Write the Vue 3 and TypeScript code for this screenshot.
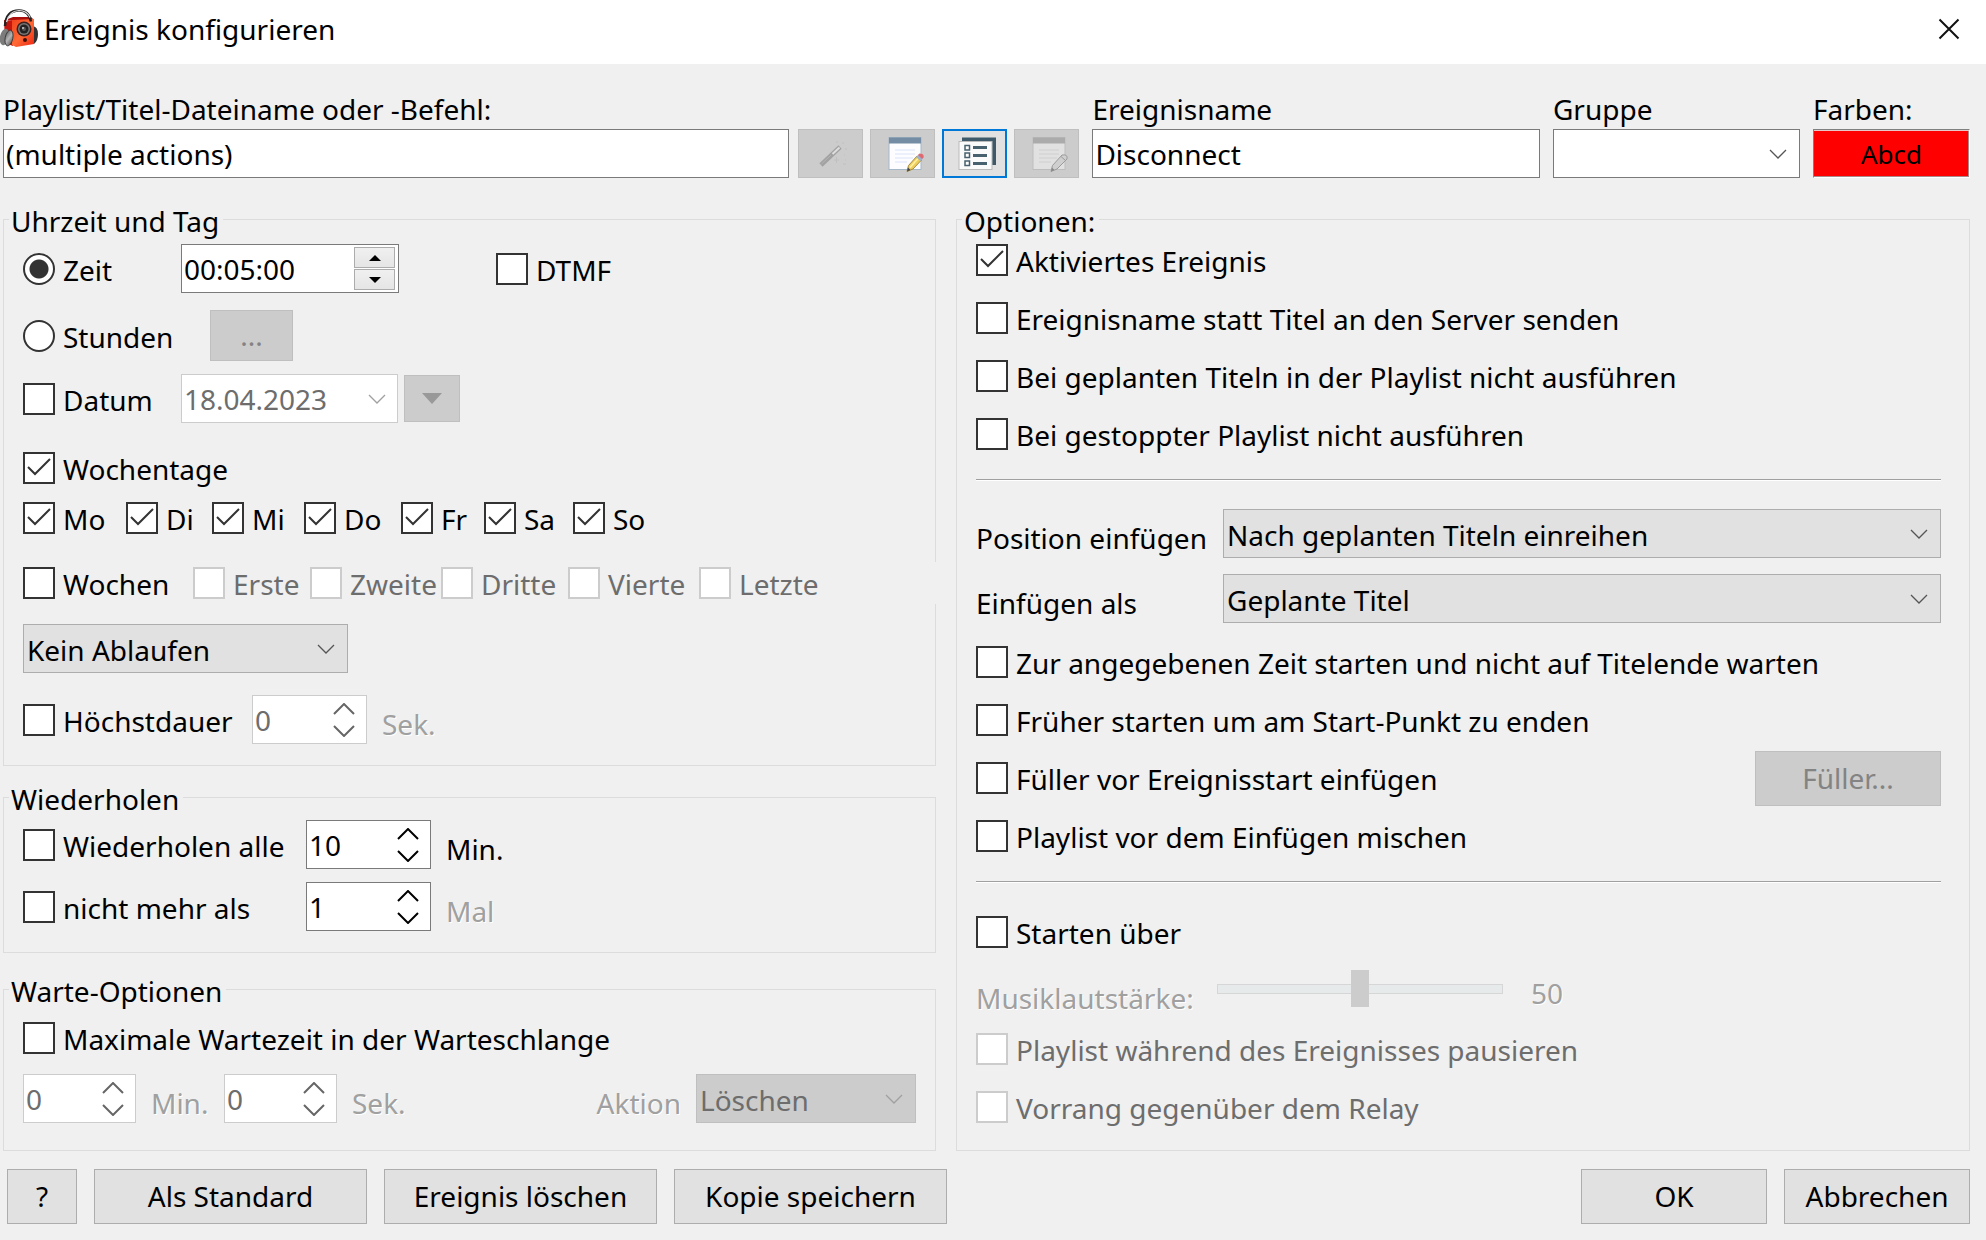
<script setup lang="ts">
import { reactive, ref } from 'vue'

interface Option {
  label: string
  checked: boolean
}

const opts = (labels: string[], checked = false): Option[] =>
  labels.map((label) => ({ label, checked }))

const fileName = ref('(multiple actions)')
const eventName = ref('Disconnect')
const group = ref('')
const mode = ref('time')
const time = ref('00:05:00')
const date = ref('18.04.2023')
const dtmf = ref(false)
const useDate = ref(false)
const useDays = ref(true)
const useWeeks = ref(false)
const days = reactive(opts(['Mo', 'Di', 'Mi', 'Do', 'Fr', 'Sa', 'So'], true))
const weeks = reactive(opts(['Erste', 'Zweite', 'Dritte', 'Vierte', 'Letzte']))
const expiry = ref('Kein Ablaufen')
const useMax = ref(false)
const maxDuration = ref(0)

const repeats = reactive([
  { label: 'Wiederholen alle', checked: false, value: 10, unit: 'Min.', dim: false },
  { label: 'nicht mehr als', checked: false, value: 1, unit: 'Mal', dim: true },
])

const useWait = ref(false)
const waits = reactive([
  { value: 0, unit: 'Min.' },
  { value: 0, unit: 'Sek.' },
])
const waitAction = ref('Löschen')

const general = reactive<Option[]>([
  { label: 'Aktiviertes Ereignis', checked: true },
  ...opts([
    'Ereignisname statt Titel an den Server senden',
    'Bei geplanten Titeln in der Playlist nicht ausführen',
    'Bei gestoppter Playlist nicht ausführen',
  ]),
])
const position = ref('Nach geplanten Titeln einreihen')
const insertAs = ref('Geplante Titel')
const starting = reactive(
  opts([
    'Zur angegebenen Zeit starten und nicht auf Titelende warten',
    'Früher starten um am Start-Punkt zu enden',
    'Füller vor Ereignisstart einfügen',
    'Playlist vor dem Einfügen mischen',
  ]),
)
const startOver = ref(false)
const volume = ref(50)
const overOptions = reactive(
  opts(['Playlist während des Ereignisses pausieren', 'Vorrang gegenüber dem Relay']),
)
</script>

<template>
  <div class="dialog">
    <header class="titlebar">
      <svg class="logo" viewBox="0 0 38 38" aria-hidden="true">
        <defs>
          <linearGradient id="box" x1="0" y1="0" x2="1" y2="1">
            <stop offset="0" stop-color="#f0401c" />
            <stop offset="0.5" stop-color="#ff6a35" />
            <stop offset="1" stop-color="#ee2410" />
          </linearGradient>
          <linearGradient id="cup" x1="0" y1="0" x2="1" y2="1">
            <stop offset="0" stop-color="#555" />
            <stop offset="0.5" stop-color="#b5b5b5" />
            <stop offset="1" stop-color="#4a4a4a" />
          </linearGradient>
        </defs>
        <path d="M33 17q5 1 5 8t-4 10z" fill="#333" />
        <path d="M5 11l8-3h18l3 3-2 1H13z" fill="#a80f0c" />
        <path d="M4 11l9 1v25l-8-3z" fill="#c3170f" />
        <path d="M12 11l22-1v25l-18 3-4-2z" fill="url(#box)" />
        <path d="M5 17Q6 1.500 19 1.500q10 0 12 11" fill="none" stroke="#222" stroke-width="2.500" />
        <path d="M6.500 13Q9 2 19 1.500q8 0 11 7" fill="none" stroke="#e4e4e4" stroke-width="1.200" />
        <circle cx="24" cy="20" r="7.500" fill="#3a2220" />
        <circle cx="24" cy="20" r="6" fill="#777" />
        <circle cx="24" cy="20" r="4.500" fill="#222" />
        <circle cx="24" cy="20" r="2" fill="#555" />
        <circle cx="23" cy="19" r="1" fill="#ccc" />
        <circle cx="25" cy="31" r="2" fill="#401008" />
        <ellipse cx="4.500" cy="28" rx="4.500" ry="8.500" transform="rotate(12 4.500 28)" fill="#7c7c7c" />
        <ellipse cx="9" cy="29" rx="3.800" ry="8" transform="rotate(12 9 29)" fill="url(#cup)" stroke="#333" stroke-width="0.800" />
      </svg>
      <h1 class="title">Ereignis konfigurieren</h1>
      <button type="button" class="close" aria-label="Schließen">
        <svg width="22" height="22" viewBox="0 0 22 22"><path d="M1.500 1.500l19 19M20.500 1.500l-19 19" stroke="#111" stroke-width="2" /></svg>
      </button>
    </header>

    <form class="body" @submit.prevent>
      <div class="top">
        <div class="field">
          <label for="file">Playlist/Titel-Dateiname oder -Befehl:</label>
          <div class="file-row">
            <input id="file" v-model="fileName" class="text" type="text" />
            <div class="tools">
              <button type="button" class="tool" disabled aria-label="Assistent">
                <svg viewBox="0 0 42 42">
                  <path d="M11 32L30 14" stroke="#a2a2a2" stroke-width="4.500" />
                  <path d="M22.500 21L29.500 14.500" stroke="#dedede" stroke-width="2" />
                  <path d="M11.500 31L21 22" stroke="#b4b4b4" stroke-width="1" />
                  <path d="M26 9h2M32 10h2M35 16h2M34 22h1M24 27h5M26.500 24v6M33 31h3M35 27h1" stroke="#c0c0c0" stroke-width="1" />
                </svg>
              </button>
              <button type="button" class="tool" aria-label="Bearbeiten">
                <svg viewBox="0 0 42 42">
                  <rect x="7" y="4.500" width="32" height="32" fill="#fdfdff" stroke="#a5b8c8" />
                  <rect x="7" y="4.500" width="32" height="6" fill="#758da4" />
                  <path d="M13 17h20M13 21h20M13 25h18M13 29h12" stroke="#e6ecfb" stroke-width="1.500" />
                  <path d="M25 38.500l1.500-6L35 23l4.500 4-8.500 9z" fill="#efcf5c" stroke="#a58a43" />
                  <path d="M28 34.500l8-9" stroke="#fff2a8" stroke-width="1.500" />
                  <path d="M34 24l2.500-2.500 4.500 4-2.500 2.500z" fill="#9eb2cf" />
                  <path d="M36 22l1.500-1.500q5 0 4 4L40 26z" fill="#e06a70" />
                  <path d="M25 38.500l1-4 2.500 2.500z" fill="#444" />
                </svg>
              </button>
              <button type="button" class="tool active" aria-label="Aktionsliste">
                <svg viewBox="0 0 42 42">
                  <path d="M8 4.500h34V32h-4V9H8z" fill="#3e5a6a" />
                  <rect x="5" y="8.500" width="33" height="28" fill="#fafafa" stroke="#bbb" />
                  <path d="M11 12.500h4.500V17H11zM11 20h4.500v4.500H11zM11 28h4.500v4.500H11z" fill="#fff" stroke="#48616f" stroke-width="1.500" />
                  <path d="M19 14.500h14M19 22.500h14M19 30.500h14" stroke="#48616f" stroke-width="3" />
                </svg>
              </button>
              <button type="button" class="tool" disabled aria-label="Aktion bearbeiten">
                <svg viewBox="0 0 42 42">
                  <rect x="7" y="4.500" width="32" height="32" fill="#e1e1e1" stroke="#bdbdbd" />
                  <rect x="7" y="4.500" width="32" height="6" fill="#ababab" />
                  <path d="M13 17h20M13 21h20M13 25h18M13 29h12" stroke="#d5d5d5" stroke-width="1.500" />
                  <path d="M25 38.500l1.500-6L36 22q6-1 5 4l-10 10z" fill="#cfcfcf" stroke="#9b9b9b" />
                  <path d="M35 23.500l4.500 4" stroke="#9b9b9b" />
                  <path d="M25 38.500l1-4 2.500 2.500z" fill="#888" />
                </svg>
              </button>
            </div>
          </div>
        </div>
        <div class="field">
          <label for="name">Ereignisname</label>
          <input id="name" v-model="eventName" class="text" type="text" />
        </div>
        <div class="field">
          <label for="group">Gruppe</label>
          <span class="combo white">
            <select id="group" v-model="group"><option value=""></option></select>
            <svg viewBox="0 0 18 10"><path d="M1 1l8 8 8-8" /></svg>
          </span>
        </div>
        <div class="field">
          <label for="colors">Farben:</label>
          <button id="colors" type="button" class="swatch">Abcd</button>
        </div>
      </div>

      <div class="columns">
        <div class="left">
          <fieldset>
            <legend>Uhrzeit und Tag</legend>
            <div class="row time">
              <label class="check lead"><input v-model="mode" type="radio" name="mode" value="time" /><span>Zeit</span></label>
              <span class="spin clock">
                <input v-model="time" type="text" aria-label="Uhrzeit" />
                <span class="steps">
                  <button type="button" aria-label="Später"><svg viewBox="0 0 12 6"><path d="M0 6l6-6 6 6z" /></svg></button>
                  <button type="button" aria-label="Früher"><svg viewBox="0 0 12 6"><path d="M0 0l6 6 6-6z" /></svg></button>
                </span>
              </span>
              <label class="check dtmf"><input v-model="dtmf" type="checkbox" /><span>DTMF</span></label>
            </div>
            <div class="row hours">
              <label class="check lead"><input v-model="mode" type="radio" name="mode" value="hours" /><span>Stunden</span></label>
              <button type="button" class="button dots" disabled>...</button>
            </div>
            <div class="row date">
              <label class="check lead"><input v-model="useDate" type="checkbox" /><span>Datum</span></label>
              <span class="spin picker off">
                <input v-model="date" type="text" aria-label="Datum" disabled />
                <svg viewBox="0 0 18 10"><path d="M1 1l8 8 8-8" /></svg>
              </span>
              <button type="button" class="button drop" disabled aria-label="Datum wählen">
                <svg viewBox="0 0 20 11"><path d="M0 0h20L10 11z" /></svg>
              </button>
            </div>
            <div class="row weekdays">
              <label class="check"><input v-model="useDays" type="checkbox" /><span>Wochentage</span></label>
            </div>
            <div class="days">
              <label v-for="d in days" :key="d.label" class="check"><input v-model="d.checked" type="checkbox" /><span>{{ d.label }}</span></label>
            </div>
            <div class="weeks">
              <label class="check"><input v-model="useWeeks" type="checkbox" /><span>Wochen</span></label>
              <label v-for="w in weeks" :key="w.label" class="check off"><input v-model="w.checked" type="checkbox" disabled /><span>{{ w.label }}</span></label>
            </div>
            <div class="row expiry">
              <span class="combo">
                <select v-model="expiry" aria-label="Ablauf"><option>Kein Ablaufen</option></select>
                <svg viewBox="0 0 18 10"><path d="M1 1l8 8 8-8" /></svg>
              </span>
            </div>
            <div class="row max">
              <label class="check"><input v-model="useMax" type="checkbox" /><span>Höchstdauer</span></label>
              <span class="spin off">
                <input id="max" v-model.number="maxDuration" type="number" disabled />
                <span class="arrows">
                  <button type="button" disabled aria-label="Mehr"><svg viewBox="0 0 22 12"><path d="M1 11L11 1l10 10" /></svg></button>
                  <button type="button" disabled aria-label="Weniger"><svg viewBox="0 0 22 12"><path d="M1 1l10 10L21 1" /></svg></button>
                </span>
              </span>
              <label class="unit dim" for="max">Sek.</label>
            </div>
          </fieldset>

          <fieldset class="repeat">
            <legend>Wiederholen</legend>
            <div v-for="(r, i) in repeats" :key="r.label" class="row">
              <label class="check"><input v-model="r.checked" type="checkbox" /><span>{{ r.label }}</span></label>
              <span class="spin">
                <input :id="'repeat' + i" v-model.number="r.value" type="number" />
                <span class="arrows">
                  <button type="button" aria-label="Mehr" @click="r.value++"><svg viewBox="0 0 22 12"><path d="M1 11L11 1l10 10" /></svg></button>
                  <button type="button" aria-label="Weniger" @click="r.value--"><svg viewBox="0 0 22 12"><path d="M1 1l10 10L21 1" /></svg></button>
                </span>
              </span>
              <label class="unit" :class="{ dim: r.dim }" :for="'repeat' + i">{{ r.unit }}</label>
            </div>
          </fieldset>

          <fieldset class="wait">
            <legend>Warte-Optionen</legend>
            <label class="check"><input v-model="useWait" type="checkbox" /><span>Maximale Wartezeit in der Warteschlange</span></label>
            <div class="row">
              <div v-for="(w, i) in waits" :key="w.unit" class="pair">
                <span class="spin off">
                  <input :id="'wait' + i" v-model.number="w.value" type="number" disabled />
                  <span class="arrows">
                    <button type="button" disabled aria-label="Mehr"><svg viewBox="0 0 22 12"><path d="M1 11L11 1l10 10" /></svg></button>
                    <button type="button" disabled aria-label="Weniger"><svg viewBox="0 0 22 12"><path d="M1 1l10 10L21 1" /></svg></button>
                  </span>
                </span>
                <label class="unit dim" :for="'wait' + i">{{ w.unit }}</label>
              </div>
              <label class="unit dim action" for="action">Aktion</label>
              <span class="combo off">
                <select id="action" v-model="waitAction" disabled><option>Löschen</option></select>
                <svg viewBox="0 0 18 10"><path d="M1 1l8 8 8-8" /></svg>
              </span>
            </div>
          </fieldset>
        </div>

        <fieldset class="options">
          <legend>Optionen:</legend>
          <div class="list general">
            <label v-for="o in general" :key="o.label" class="check"><input v-model="o.checked" type="checkbox" /><span>{{ o.label }}</span></label>
          </div>
          <hr />
          <div class="selects">
            <div class="row">
              <label class="unit" for="position">Position einfügen</label>
              <span class="combo">
                <select id="position" v-model="position"><option>Nach geplanten Titeln einreihen</option></select>
                <svg viewBox="0 0 18 10"><path d="M1 1l8 8 8-8" /></svg>
              </span>
            </div>
            <div class="row">
              <label class="unit" for="insert">Einfügen als</label>
              <span class="combo">
                <select id="insert" v-model="insertAs"><option>Geplante Titel</option></select>
                <svg viewBox="0 0 18 10"><path d="M1 1l8 8 8-8" /></svg>
              </span>
            </div>
          </div>
          <div class="list starting">
            <div v-for="(o, i) in starting" :key="o.label" class="line">
              <label class="check"><input v-model="o.checked" type="checkbox" /><span>{{ o.label }}</span></label>
              <button v-if="i === 2" type="button" class="button" disabled>Füller...</button>
            </div>
          </div>
          <hr />
          <label class="check over"><input v-model="startOver" type="checkbox" /><span>Starten über</span></label>
          <div class="volume">
            <label class="dim" for="volume">Musiklautstärke:</label>
            <input id="volume" v-model.number="volume" type="range" min="0" max="100" disabled />
            <output class="dim" for="volume">{{ volume }}</output>
          </div>
          <div class="list">
            <label v-for="o in overOptions" :key="o.label" class="check off"><input v-model="o.checked" type="checkbox" disabled /><span>{{ o.label }}</span></label>
          </div>
        </fieldset>
      </div>

      <footer class="footer">
        <button type="button" class="button help">?</button>
        <button type="button" class="button big">Als Standard</button>
        <button type="button" class="button big">Ereignis löschen</button>
        <button type="button" class="button big">Kopie speichern</button>
        <button type="submit" class="button ok">OK</button>
        <button type="button" class="button">Abbrechen</button>
      </footer>
    </form>
  </div>
</template>

<style>
body {
  margin: 0;
  background: #f0f0f0;
}
</style>

<style scoped>
.dialog,
.dialog * {
  box-sizing: border-box;
}
.dialog {
  min-height: 100vh;
  background: #f0f0f0;
  color: #000;
  font: 28px/38px 'Noto Sans', 'Open Sans', sans-serif;
}
button,
input,
select {
  margin: 0;
  padding: 0;
  border: 0;
  border-radius: 0;
  background: none;
  color: inherit;
  font: inherit;
  outline: none;
}
.titlebar {
  display: flex;
  align-items: center;
  height: 64px;
  padding: 0 26px 6px 0;
  background: #fff;
}
.logo {
  width: 38px;
  height: 38px;
  margin: 0 6px 2px 0;
}
.title {
  flex: 1;
  margin: 0;
  font-size: 28px;
  font-weight: 400;
}
.close {
  display: flex;
}
.body {
  padding: 26px 16px 16px 3px;
}
.top {
  display: grid;
  grid-template-columns: minmax(0, 1075fr) minmax(0, 447fr) 247px 157px;
  gap: 13px;
}
.field {
  display: flex;
  flex-direction: column;
  gap: 1px;
  min-width: 0;
}
.field > label {
  white-space: nowrap;
}
.file-row {
  display: flex;
  gap: 9px;
}
.text {
  flex: 1;
  width: 100%;
  min-width: 0;
  height: 49px;
  flex-basis: auto;
  padding: 0 2px;
  border: 1px solid #7a7a7a;
  background: #fff;
}
.file-row .text {
  flex-basis: 0;
}
.tools {
  display: flex;
  gap: 7px;
}
.tool {
  display: flex;
  align-items: center;
  justify-content: center;
  width: 65px;
  height: 49px;
  border: 1px solid #bfbfbf;
  background: #ccc;
}
.tool svg {
  flex: none;
  width: 42px;
  height: 42px;
}
.tool.active {
  border: 2px solid #0078d7;
  background: #e1e1e1;
}
.swatch {
  height: 49px;
  border: 1px solid;
  border-color: #808080 #fff #fff #808080;
  background: #f00;
  box-shadow: inset 0 1px #e8c8c8, inset -1px -1px #a88;
  font-size: 26px;
}
.combo {
  display: grid;
  align-items: center;
  height: 49px;
  border: 1px solid #adadad;
  background: #e1e1e1;
}
.combo select,
.combo svg {
  grid-area: 1 / 1;
}
.combo select {
  width: 100%;
  height: 47px;
  padding: 3px 40px 0 3px;
  appearance: none;
}
.combo svg {
  justify-self: end;
  margin-right: 12px;
  pointer-events: none;
}
.combo svg,
.picker svg {
  width: 18px;
  height: 10px;
  fill: none;
  stroke: #555;
  stroke-width: 1.3;
}
.combo.white {
  border-color: #7a7a7a;
  background: #fff;
}
.combo.off {
  border-color: #bfbfbf;
  background: #ccc;
}
.combo.off select {
  color: #6d6d6d;
  opacity: 1;
}
.combo.off svg,
.picker svg {
  stroke: #a0a0a0;
}
.columns {
  display: grid;
  grid-template-columns: minmax(0, 933fr) minmax(0, 1014fr);
  gap: 20px;
  margin-top: 20px;
}
fieldset {
  min-width: 0;
  margin: 0;
  padding: 0 19px 21px;
  border: 1px solid #dcdcdc;
}
legend {
  margin-left: -14px;
  padding: 4px 4px 0 2px;
}
.row {
  display: flex;
  align-items: center;
}
.check {
  display: flex;
  align-items: center;
  gap: 8px;
  height: 38px;
  white-space: nowrap;
}
.check span {
  padding-top: 3px;
  line-height: 35px;
}
.check input {
  flex: none;
  width: 32px;
  height: 32px;
  border: 2px solid #333;
  background: #fff;
  appearance: none;
}
.check input[type='checkbox']:checked {
  background: #fff url("data:image/svg+xml,%3Csvg xmlns='http://www.w3.org/2000/svg' viewBox='0 0 28 28'%3E%3Cpath d='M3 13l7 7L25 5' fill='none' stroke='%23333' stroke-width='2'/%3E%3C/svg%3E") center / 28px 28px;
}
.check input[type='radio'] {
  border-radius: 50%;
}
.check input[type='radio']:checked {
  background: radial-gradient(circle, #333 9px, #fff 10px);
}
.check.off {
  color: #6d6d6d;
}
.check.off input {
  border-color: #ccc;
}
.lead {
  width: 158px;
}
.unit {
  padding-top: 9px;
  line-height: 32px;
  white-space: nowrap;
}
.dim {
  color: #a0a0a0;
  text-shadow: 1px 1px #fff;
}
.spin {
  display: flex;
  align-items: center;
  height: 49px;
  border: 1px solid #7a7a7a;
  background: #fff;
}
.spin > input {
  flex: 1;
  width: 0;
  min-width: 0;
  height: 47px;
  padding-left: 2px;
  appearance: textfield;
}
.spin > input::-webkit-inner-spin-button {
  appearance: none;
}
.spin.off {
  border-color: #ccc;
  color: #6d6d6d;
}
.arrows {
  display: grid;
  gap: 10px;
  margin-right: 11px;
}
.arrows button {
  display: flex;
}
.arrows svg {
  width: 22px;
  height: 12px;
  fill: none;
  stroke: #000;
  stroke-width: 2;
}
.off .arrows svg {
  stroke: #666;
}
.clock {
  width: 218px;
}
.steps {
  display: grid;
  gap: 1px;
  margin-right: 3px;
}
.steps button {
  display: flex;
  align-items: center;
  justify-content: center;
  width: 41px;
  height: 21px;
  border: 1px solid #acacac;
  background: linear-gradient(#f0f0f0, #e5e5e5);
}
.steps svg {
  width: 12px;
  height: 6px;
}
.dtmf {
  margin-left: 97px;
}
.time {
  margin-top: 4px;
}
.hours {
  margin-top: 17px;
}
.date {
  margin-top: 13px;
}
.picker {
  width: 217px;
}
.picker svg {
  margin-right: 11px;
}
.button {
  height: 55px;
  width: 186px;
  padding-bottom: 1px;
  border: 1px solid #adadad;
  background: #e1e1e1;
  white-space: nowrap;
}
.button:disabled {
  border-color: #bfbfbf;
  background: #ccc;
  color: #838383;
}
.dots {
  width: 83px;
  height: 51px;
  margin-left: 29px;
}
.drop {
  display: flex;
  align-items: center;
  justify-content: center;
  width: 56px;
  height: 47px;
  margin-left: 6px;
}
.drop svg {
  width: 20px;
  height: 11px;
  fill: #999;
}
.weekdays {
  margin-top: 26px;
}
.days {
  display: grid;
  grid-template-columns: 103px 86px 92px 97px 83px 89px auto;
  margin-top: 12px;
}
/* The week row runs over the group's right edge and interrupts its border. */
.weeks {
  display: grid;
  grid-template-columns: 170px 117px 131px 127px 131px auto;
  align-items: center;
  height: 42px;
  margin: 25px -20px 0 0;
  background: #f0f0f0;
}
.expiry {
  margin-top: 20px;
}
.expiry .combo {
  width: 325px;
}
.max {
  margin-top: 22px;
}
.max .check {
  width: 229px;
}
.max .spin {
  width: 115px;
  margin-right: 15px;
}
.repeat {
  margin-top: 10px;
}
.repeat .row {
  margin-top: 2px;
}
.repeat .row + .row {
  margin-top: 13px;
}
.repeat .check {
  width: 283px;
}
.repeat .spin {
  width: 125px;
  margin-right: 15px;
}
.wait {
  margin-top: 15px;
  padding-bottom: 27px;
}
.wait > .check {
  margin-top: 9px;
}
.wait .row {
  margin-top: 17px;
}
.pair {
  display: flex;
  align-items: center;
  width: 201px;
}
.wait .spin {
  width: 113px;
  margin-right: 15px;
}
.action {
  margin: 0 15px 0 auto;
}
.wait .combo {
  width: 220px;
}
.options {
  padding: 0 28px 17px 19px;
}
hr {
  height: 2px;
  margin: 26px 0 28px;
  border: 0;
  border-top: 1px solid #a0a0a0;
  background: #fff;
}
.list {
  display: grid;
  gap: 20px;
}
.general {
  margin-top: 1px;
}
.selects {
  display: grid;
  gap: 16px;
}
.selects .unit {
  width: 247px;
}
.selects .combo {
  flex: 1;
}
.starting {
  margin-top: 20px;
}
.line {
  display: flex;
  align-items: center;
  justify-content: space-between;
  height: 38px;
}
.over {
  margin-top: 30px;
}
.volume {
  display: grid;
  grid-template-columns: 241px 286px auto;
  align-items: start;
  margin: 19px 0 13px;
}
.volume label {
  padding-top: 9px;
}
.volume output {
  padding: 4px 0 0 28px;
}
.volume input {
  width: 286px;
  height: 37px;
  appearance: none;
}
.volume input::-webkit-slider-runnable-track {
  height: 10px;
  border: 1px solid #d6d6d6;
  background: #e7eaea;
}
.volume input::-webkit-slider-thumb {
  width: 18px;
  height: 37px;
  margin-top: -15px;
  border-radius: 0;
  background: #ccc;
  appearance: none;
}
.footer {
  display: flex;
  gap: 17px;
  margin-top: 18px;
  padding-left: 4px;
}
.help {
  width: 70px;
}
.big {
  width: 273px;
}
.ok {
  margin-left: auto;
}
</style>
